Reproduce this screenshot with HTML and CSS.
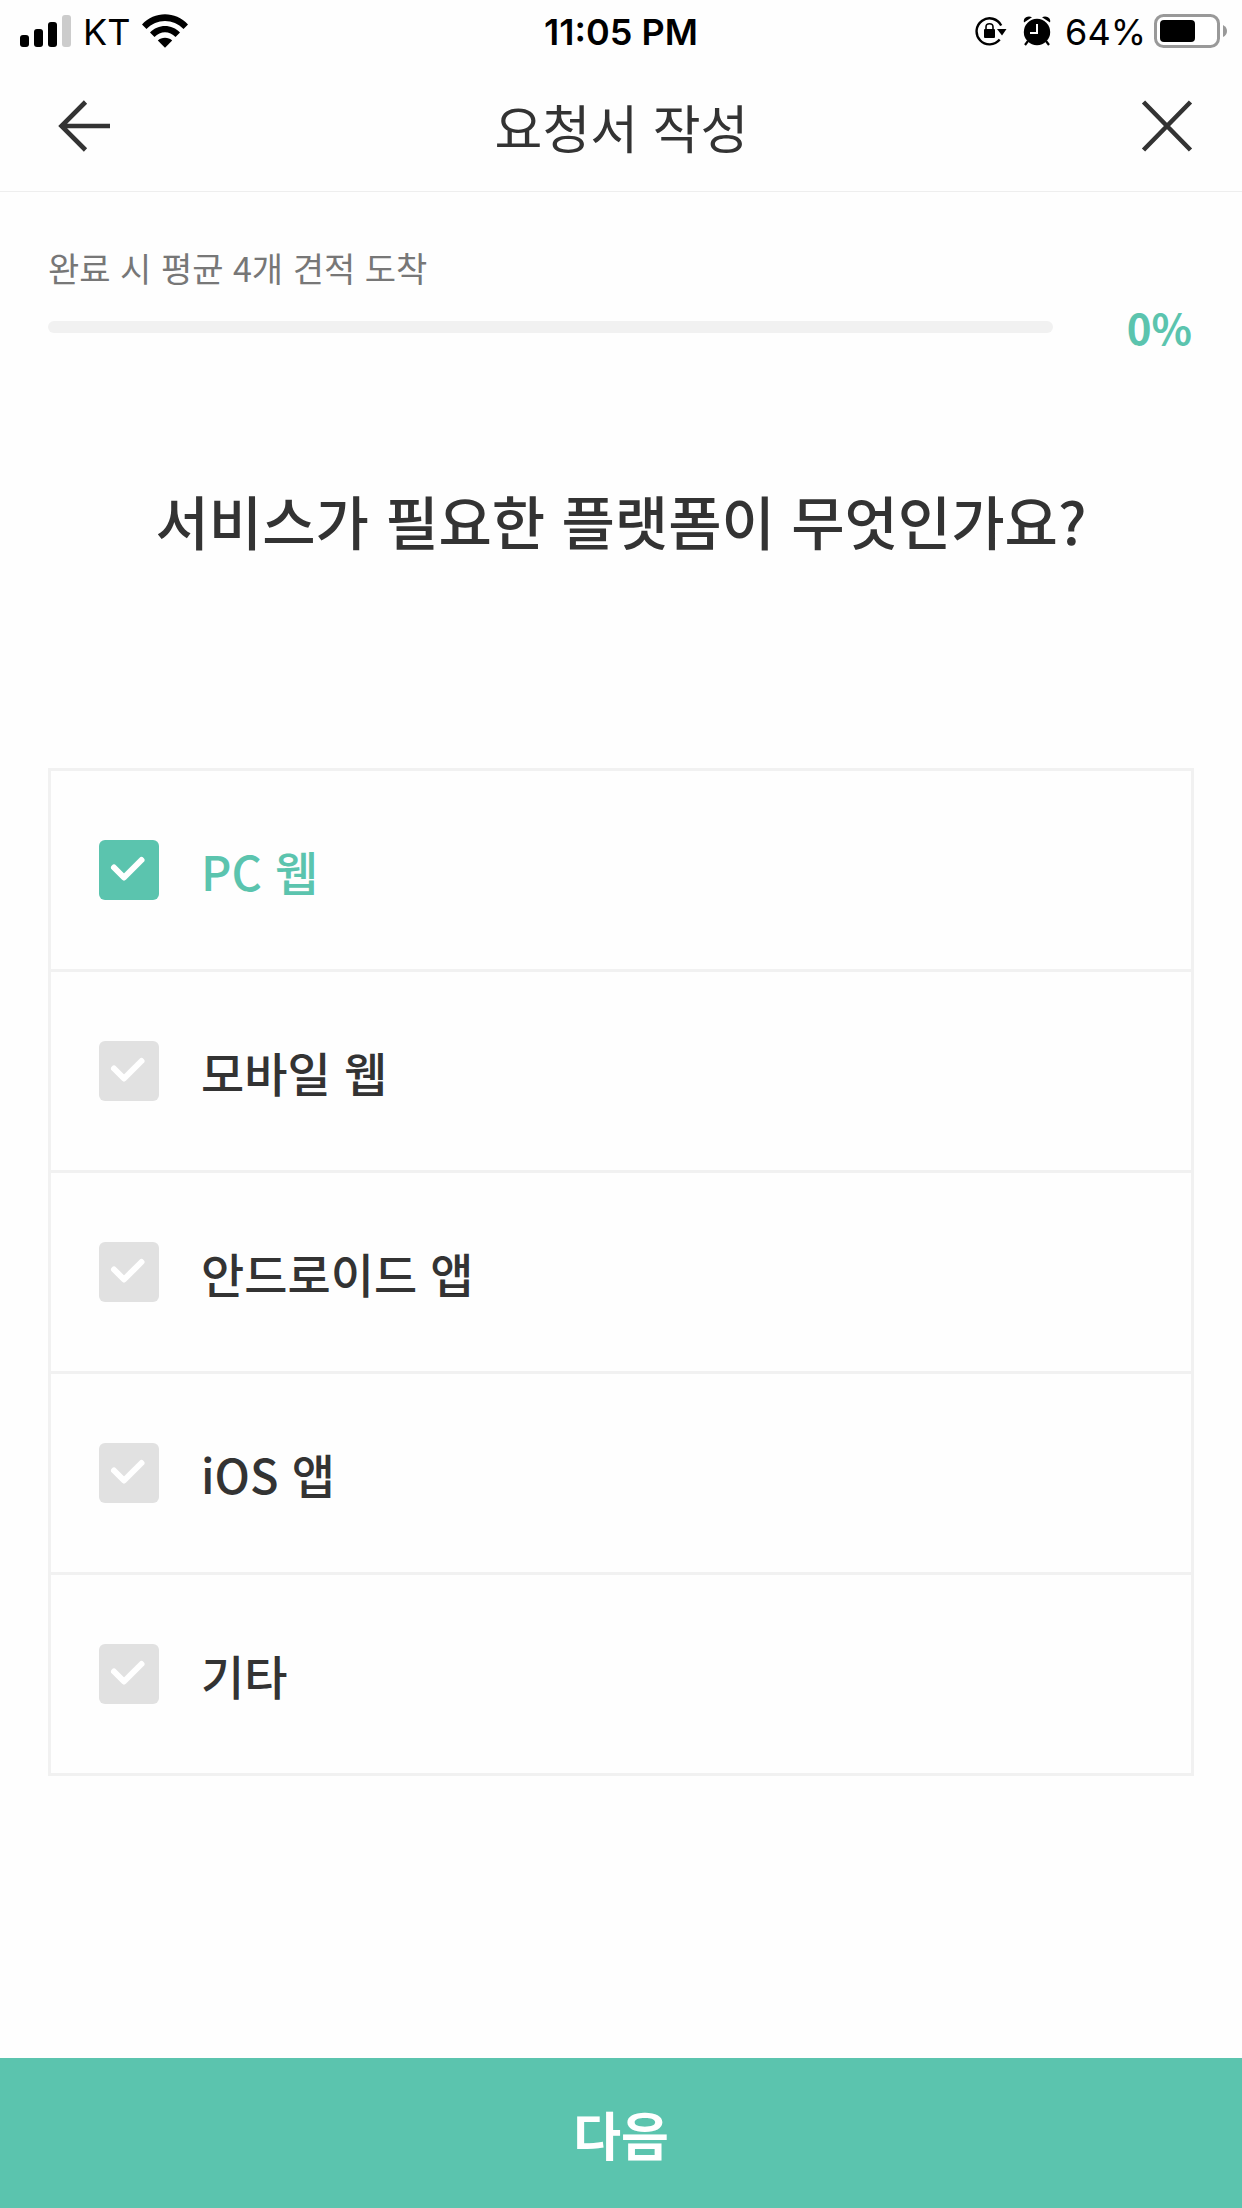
FILE: index.html
```html
<!DOCTYPE html>
<html lang="ko">
<head>
  <meta charset="utf-8">
  <meta name="viewport" content="width=device-width, initial-scale=1">
  <title>요청서 작성</title>
  <link rel="stylesheet" href="styles.css">
</head>
<body>
  <div class="status">
    <div class="status-side">
      <svg class="signal" width="51" height="32" viewBox="0 0 51 32" aria-hidden="true">
        <rect x="0" y="20" width="9" height="12" rx="3"/>
        <rect x="14" y="14" width="9" height="18" rx="3"/>
        <rect x="28" y="7" width="9" height="25" rx="3"/>
        <rect x="42" y="0" width="9" height="32" rx="3" fill="#ccc"/>
      </svg>
      <span class="carrier">KT</span>
      <svg width="46" height="34" viewBox="0 0 46 34" aria-hidden="true">
        <path d="M0 10.500C12.500-3.200 33.500-3.200 46 10.500L41.500 15C31.500 4.300 14.500 4.300 4.500 15Z"/>
        <path d="M8 18.500C16 9.800 30 9.800 38 18.500L33.500 23C27.500 16.600 18.500 16.600 12.500 23Z"/>
        <path d="M15.800 26.600C19.500 22.800 26.500 22.800 30.200 26.600L23 33.800Z"/>
      </svg>
    </div>
    <span class="time">11:05 PM</span>
    <div class="status-side status-end">
      <svg width="32" height="30" viewBox="0 0 32 30" aria-hidden="true">
        <path d="M26.200 9.500A13 13 0 1 0 24.700 23.500" fill="none" stroke="#000" stroke-width="2.400"/>
        <path d="M22 13H31.500L27 19.500Z"/>
        <rect x="9" y="13" width="11" height="9" rx="1"/>
        <path d="M11 14V11Q11 7.800 14.500 7.800T18 11V14" fill="none" stroke="#000" stroke-width="1.600"/>
      </svg>
      <svg class="alarm" width="28" height="30" viewBox="0 0 28 30" aria-hidden="true">
        <circle cx="14" cy="16" r="13.200"/>
        <path d="M-.5 8L10.500-.5M28.500 8L17.500-.5" stroke="#fff" stroke-width="2"/>
        <path d="M1 6.500Q0 3 3 1.300T9 1.300ZM27 6.500Q28 3 25 1.300T19 1.300Z"/>
        <path d="M5 25L2 29M23 25L26 29" stroke="#000" stroke-width="2.200"/>
        <path d="M14 8V17H7" fill="none" stroke="#fff" stroke-width="2"/>
      </svg>
      <span class="charge">64%</span>
      <svg class="battery" width="74" height="34" viewBox="0 0 74 34" aria-hidden="true">
        <rect x="1.500" y="1.500" width="63" height="31" rx="8" fill="#fff" stroke="#999" stroke-width="3"/>
        <rect x="6" y="6" width="35" height="22" rx="4"/>
        <path d="M69 11Q73 13 73 17T69 23Z" fill="#999"/>
      </svg>
    </div>
  </div>

  <header class="header">
    <button class="icon-button" type="button" aria-label="뒤로">
      <svg width="52" height="52" viewBox="0 0 52 52" aria-hidden="true">
        <path d="M27.500 2L3.500 26L27.500 50M3.500 26H52" fill="none" stroke="#333" stroke-width="4.600"/>
      </svg>
    </button>
    <h1 class="title">요청서 작성</h1>
    <button class="icon-button" type="button" aria-label="닫기">
      <svg width="52" height="52" viewBox="0 0 52 52" aria-hidden="true">
        <path d="M2.500 2L49.500 50M49.500 2L2.500 50" fill="none" stroke="#333" stroke-width="4.600"/>
      </svg>
    </button>
  </header>

  <main class="main">
    <section class="progress">
      <label class="progress-label" for="progress">완료 시 평균 4개 견적 도착</label>
      <div class="progress-row">
        <progress class="bar" id="progress" value="0" max="100"></progress>
        <span class="percent">0%</span>
      </div>
    </section>

    <h2 class="question" id="question">서비스가 필요한 플랫폼이 무엇인가요?</h2>

    <form class="options" id="request" aria-labelledby="question">
      <label class="option">
        <span class="tick">
          <input class="box" type="checkbox" name="platform" value="pc" checked>
          <svg class="mark" viewBox="0 0 60 60" aria-hidden="true"><path d="M15 27.500L25 37.500L42.500 20"/></svg>
        </span>
        <span class="name">PC 웹</span>
      </label>
      <label class="option">
        <span class="tick">
          <input class="box" type="checkbox" name="platform" value="mobile">
          <svg class="mark" viewBox="0 0 60 60" aria-hidden="true"><path d="M15 27.500L25 37.500L42.500 20"/></svg>
        </span>
        <span class="name">모바일 웹</span>
      </label>
      <label class="option">
        <span class="tick">
          <input class="box" type="checkbox" name="platform" value="android">
          <svg class="mark" viewBox="0 0 60 60" aria-hidden="true"><path d="M15 27.500L25 37.500L42.500 20"/></svg>
        </span>
        <span class="name">안드로이드 앱</span>
      </label>
      <label class="option">
        <span class="tick">
          <input class="box" type="checkbox" name="platform" value="ios">
          <svg class="mark" viewBox="0 0 60 60" aria-hidden="true"><path d="M15 27.500L25 37.500L42.500 20"/></svg>
        </span>
        <span class="name">iOS 앱</span>
      </label>
      <label class="option">
        <span class="tick">
          <input class="box" type="checkbox" name="platform" value="etc">
          <svg class="mark" viewBox="0 0 60 60" aria-hidden="true"><path d="M15 27.500L25 37.500L42.500 20"/></svg>
        </span>
        <span class="name">기타</span>
      </label>
    </form>
  </main>

  <button class="next" type="submit" form="request">다음</button>
</body>
</html>
```
FILE: styles.css
```css
* {
  box-sizing: border-box;
}

body {
  display: flex;
  flex-direction: column;
  min-height: 100vh;
  margin: 0;
  background: #fefefe;
  color: #333;
  font-family: "Noto Sans CJK KR", sans-serif;
}

button {
  padding: 0;
  border: 0;
  background: none;
  font: inherit;
  cursor: pointer;
}

svg {
  display: block;
  flex: none;
}

.status {
  display: grid;
  grid-template-columns: 1fr auto 1fr;
  align-items: center;
  height: 60px;
  padding: 0 14px;
  color: #000;
  font-family: Inter, sans-serif;
  font-size: 36px;
  line-height: 60px;
}

.status-side {
  display: flex;
  align-items: center;
}

.status-end {
  justify-content: flex-end;
}

.signal {
  margin-left: 6px;
}

.carrier {
  margin: 0 12px;
}

.time {
  padding-top: 2px;
  font-weight: 600;
}

.charge,
.carrier {
  padding-top: 2px;
}

.alarm {
  margin: 0 14px 0 16px;
}

.battery {
  margin-left: 8px;
}

.header {
  display: grid;
  grid-template-columns: 1fr auto 1fr;
  align-items: center;
  height: 132px;
  padding: 0 49px 0 58px;
  border-bottom: 1px solid #eee;
}

.icon-button {
  justify-self: start;
}

.title + .icon-button {
  justify-self: end;
}

.title {
  margin: 0;
  padding: 2px 8px 0 0;
  font-size: 52px;
  font-weight: 400;
  line-height: 80px;
}

.main {
  flex: 1;
  padding: 48px 48px 96px;
}

.progress-label {
  display: block;
  color: #777;
  font-size: 34px;
  line-height: 56px;
}

.progress-row {
  display: flex;
  align-items: center;
  justify-content: space-between;
  gap: 74px;
  height: 62px;
  padding-right: 2px;
}

.bar {
  flex: 1;
  height: 12px;
  border: 0;
  border-radius: 6px;
  background: #f1f1f1;
  appearance: none;
  overflow: hidden;
}

.bar::-webkit-progress-bar {
  background: #f1f1f1;
}

.bar::-webkit-progress-value {
  background: #5bc4ae;
}

.percent {
  color: #5bc4ae;
  font-size: 42px;
  font-weight: 700;
  line-height: 62px;
}

.question {
  margin: 116px 0 202px;
  font-size: 58px;
  font-weight: 500;
  line-height: 92px;
  text-align: center;
}

.options {
  border: 3px solid #f1f1f1;
}

.option {
  display: flex;
  align-items: center;
  gap: 42px;
  height: 198px;
  padding: 0 48px;
  cursor: pointer;
}

.option + .option {
  height: 201px;
  border-top: 3px solid #f1f1f1;
}

.tick {
  display: grid;
  width: 60px;
  height: 60px;
}

.box,
.mark {
  grid-area: 1 / 1;
  width: 60px;
  height: 60px;
  margin: 0;
}

.box {
  border-radius: 6px;
  background: #e1e1e1;
  appearance: none;
}

.box:checked {
  background: #5bc4ae;
}

.mark {
  fill: none;
  stroke: #fff;
  stroke-width: 6;
  stroke-linecap: round;
  stroke-linejoin: round;
  pointer-events: none;
}

.name {
  padding-top: 2px;
  font-size: 47px;
  font-weight: 500;
  line-height: 72px;
}

.option:has(:checked) .name {
  color: #5bc4ae;
}

.next {
  height: 150px;
  padding-top: 2px;
  background: #5bc4ae;
  color: #fff;
  font-size: 52px;
  font-weight: 700;
  line-height: 80px;
}
```
